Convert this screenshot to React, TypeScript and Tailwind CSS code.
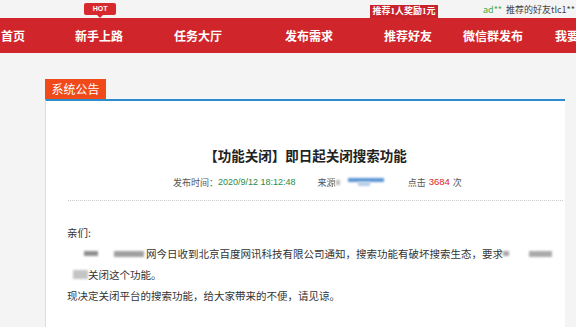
import React from "react";

const cjk = "font-['Noto_Sans_CJK_SC','Liberation_Sans',sans-serif]";

function Blur({ w, h = "h-[8px]", tone = "bg-[#9a9a9a]" }: { w: string; h?: string; tone?: string }) {
  return <span className={`inline-block ${w} ${h} ${tone} blur-[1px] align-middle`} />;
}

export default function App(): JSX.Element {
  return (
    <div className={`w-[576px] h-[327px] overflow-hidden bg-[#f4f4f4] ${cjk}`}>
      {/* top strip */}
      <div className="h-[18px] flex items-center justify-end pr-[1px] whitespace-nowrap text-[9px] leading-none">
        <span className="text-[#4aa84a]">ad**</span>
        <span className="ml-[4px] text-[#444]">推荐的好友tlc1**</span>
      </div>

      {/* nav */}
      <div className="h-[35px] bg-[#d0262b] flex items-center whitespace-nowrap text-white text-[12px] font-bold leading-none">
        <span className="ml-[1px]">首页</span>
        <span className="ml-[50px] relative">
          新手上路
          <span className="absolute left-[9px] -top-[27px] w-[32px] h-[12px] bg-[#d62a2e] rounded-[2px] flex items-center justify-center text-[7px] font-bold font-['Liberation_Sans',sans-serif]">
            HOT
            <span className="absolute left-[13px] -bottom-[3px] w-0 h-0 border-l-[3px] border-r-[3px] border-t-[3px] border-l-transparent border-r-transparent border-t-[#d62a2e]" />
          </span>
        </span>
        <span className="ml-[51px]">任务大厅</span>
        <span className="ml-[63px]">发布需求</span>
        <span className="ml-[51px] relative">
          推荐好友
          <span className="absolute -left-[14px] -top-[25px] w-[68px] h-[13px] bg-[#c8232b] flex items-center justify-center whitespace-nowrap text-[9px] font-bold font-['Liberation_Serif','Noto_Sans_CJK_SC',serif]">
            推荐1人奖励1元
            <span className="absolute left-[31px] -bottom-[3px] w-0 h-0 border-l-[3px] border-r-[3px] border-t-[3px] border-l-transparent border-r-transparent border-t-[#c8232b]" />
          </span>
        </span>
        <span className="ml-[31px]">微信群发布</span>
        <span className="ml-[32px]">我要</span>
      </div>

      {/* content */}
      <div className="pt-[26px] pl-[45px]">
        <div className="w-[61px] h-[20px] bg-[#f04a1b] text-white text-[12px] flex items-center justify-center leading-none">
          系统公告
        </div>
        <div className="w-[520px] border-t-2 border-[#2f8ccc] bg-white border-l border-l-[#dddddd] h-[240px]">
          <h1 className="mt-[44px] text-center text-[13.5px] leading-[20px] font-bold text-[#222]">
            【功能关闭】即日起关闭搜索功能
          </h1>
          <div className="mt-[9px] h-[16px] flex items-center text-[9px] text-[#555] whitespace-nowrap leading-none">
            <span className="ml-[127px]">发布时间：</span>
            <span className="text-[#2a8a4a] font-['Liberation_Sans',sans-serif] text-[9px]">2020/9/12 18:12:48</span>
            <span className="ml-[22px]">来</span>
            <span className="blur-[0.6px]">源</span>
            <Blur w="w-[4px]" h="h-[5px]" tone="bg-[#bbbbbb]" />
            <span className="ml-[8px] inline-flex flex-col">
              <span className="inline-block w-[36px] h-[4px] bg-[#5b95d4] blur-[0.8px]" />
              <span className="ml-[10px] inline-block w-[12px] h-[4px] bg-[#b5cde8] blur-[0.8px]" />
            </span>
            <span className="ml-[24px]">点击</span>
            <span className="ml-[3px] text-[#d9241c] font-['Liberation_Sans',sans-serif] text-[9.5px]">3684</span>
            <span className="ml-[3px]">次</span>
          </div>
          <div className="mt-[10px] ml-[22px] mr-[2px] border-t border-dotted border-[#cccccc]" />
          <div className="mt-[21px] pl-[21px] text-[10.5px] leading-[21px] text-[#333] whitespace-nowrap">
            <p>亲们:</p>
            <p className="flex items-center">
              <span className="ml-[17px]" />
              <Blur w="w-[14px]" h="h-[5px]" tone="bg-[#8f8f8f]" />
              <span className="ml-[16px]" />
              <Blur w="w-[30px]" h="h-[6px]" tone="bg-[#a0a0a0]" />
              <span className="ml-[2px]">网今日收到北京百度网讯科技有限公司通知，搜索功能有破坏搜索生态，要求</span>
              <Blur w="w-[6px]" h="h-[5px]" tone="bg-[#a8a8a8]" />
              <span className="ml-[20px]" />
              <Blur w="w-[23px]" h="h-[6px]" tone="bg-[#aaaaaa]" />
            </p>
            <p className="flex items-center">
              <span className="ml-[6px]" />
              <Blur w="w-[15px]" h="h-[9px]" tone="bg-[#c4c4c4]" />
              <span>关闭这个功能。</span>
            </p>
            <p>现决定关闭平台的搜索功能，给大家带来的不便，请见谅。</p>
          </div>
        </div>
      </div>
    </div>
  );
}
